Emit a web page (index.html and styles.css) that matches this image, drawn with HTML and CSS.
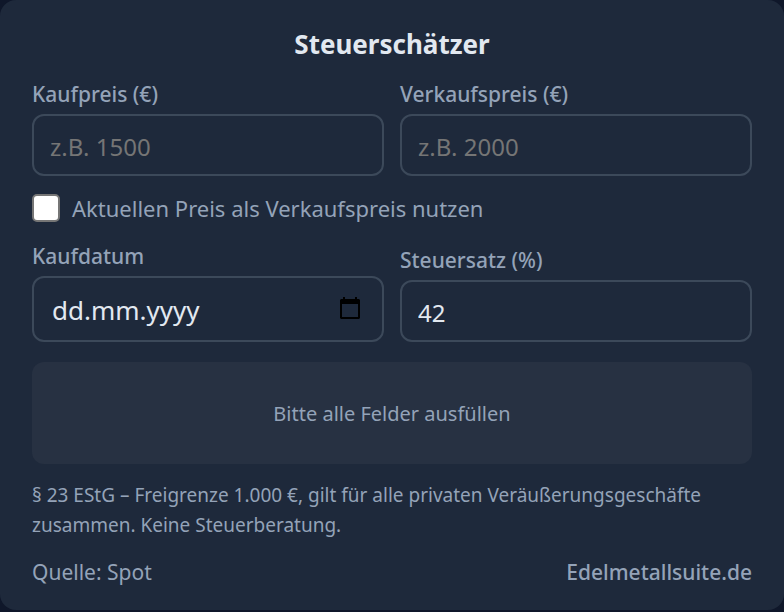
FILE: index.html
```html
<!DOCTYPE html>
<html lang="de">

<head>
    <meta charset="UTF-8">
    <meta name="viewport" content="width=device-width, initial-scale=1.0">
    <title>Steuerschätzer</title>
    <link rel="stylesheet" href="styles.css">
</head>

<body>

    <form class="widget">
        <h1 class="title">Steuerschätzer</h1>

        <div class="row">
            <div class="field">
                <label for="buy-price">Kaufpreis (€)</label>
                <input class="input" type="text" inputmode="decimal" id="buy-price" placeholder="z.B. 1500">
            </div>
            <div class="field">
                <label for="sell-price">Verkaufspreis (€)</label>
                <input class="input" type="text" inputmode="decimal" id="sell-price" placeholder="z.B. 2000">
            </div>
        </div>

        <div class="check">
            <input type="checkbox" id="use-spot">
            <label for="use-spot">Aktuellen Preis als Verkaufspreis nutzen</label>
        </div>

        <div class="row">
            <div class="field">
                <label for="buy-date">Kaufdatum</label>
                <div class="date-box">
                    <input class="date-input" type="text" id="buy-date" placeholder="dd.mm.yyyy">
                    <button class="date-button" type="button" aria-label="Kalender öffnen">
                        <svg width="20" height="22" viewBox="0 0 20 22">
                            <path fill-rule="evenodd" d="M3 0h2v2h10V0h2v2h2l1 1v18l-1 1H1l-1-1V3l1-1h2zM2 7v13h16V7z" />
                        </svg>
                    </button>
                </div>
            </div>
            <div class="field">
                <label for="tax-rate">Steuersatz (%)</label>
                <input class="input" type="text" inputmode="numeric" id="tax-rate" value="42">
            </div>
        </div>

        <div class="result">Bitte alle Felder ausfüllen</div>

        <p class="note">§ 23 EStG – Freigrenze 1.000 €, gilt für alle privaten Veräußerungsgeschäfte zusammen. Keine Steuerberatung.</p>

        <footer class="footer">
            <span>Quelle: Spot</span>
            <a href="#">Edelmetallsuite.de</a>
        </footer>
    </form>

</body>

</html>
```

FILE: styles.css
```css
* {
    box-sizing: border-box;
}

body {
    margin: 0;
    background-color: #0f172a;
    color: #e2e8f0;
    font-family: "Segoe UI", "Noto Sans", sans-serif;
}

.widget {
    padding: 26px 32px 22px;
    background-color: #1e293b;
    border-radius: 16px;
}

.title {
    margin: 0 0 16px;
    font-size: 26px;
    line-height: 36px;
    font-weight: 700;
    text-align: center;
}

.row {
    display: grid;
    grid-template-columns: repeat(2, minmax(0, 1fr));
    gap: 16px;
    align-items: end;
}

.field label {
    display: block;
    margin-bottom: 4px;
    font-size: 21px;
    line-height: 32px;
    font-weight: 500;
    color: #94a3b8;
}

.input,
.date-box {
    width: 100%;
    border: 2px solid #3c495a;
    border-radius: 12px;
    background-color: transparent;
}

.input,
.date-input {
    color: #e2e8f0;
    font-family: inherit;
    font-size: 24px;
}

.input {
    display: block;
    height: 62px;
    padding: 2px 16px 0;
}

.input::placeholder {
    color: #757575;
}

.date-box {
    display: flex;
    align-items: center;
    height: 66px;
    padding: 0 22px 0 18px;
}

.date-input {
    flex: 1;
    min-width: 0;
    padding: 2px 0 0;
    border: none;
    background: none;
    font-size: 26px;
}

.date-input::placeholder {
    color: #e2e8f0;
}

.date-button {
    padding: 0 0 2px;
    border: none;
    background: none;
    cursor: pointer;
}

.date-button svg {
    display: block;
}

.check {
    display: flex;
    align-items: center;
    gap: 12px;
    margin: 16px 0;
    font-size: 22px;
    line-height: 32px;
    color: #94a3b8;
}

.check input {
    appearance: none;
    width: 28px;
    height: 28px;
    margin: 0;
    border: 2px solid #767676;
    border-radius: 5px;
    background-color: #fff;
}

.check input:checked {
    background-color: #3b82f6;
}

.result {
    margin-top: 20px;
    padding: 36px 24px 34px;
    border-radius: 12px;
    background-color: #273142;
    color: #94a3b8;
    font-size: 20px;
    line-height: 32px;
    text-align: center;
}

.note {
    margin: 16px 0;
    color: #94a3b8;
    font-size: 19px;
    line-height: 30px;
}

.footer {
    display: flex;
    justify-content: space-between;
    color: #94a3b8;
    font-size: 21px;
    line-height: 32px;
}

.footer a {
    color: inherit;
    font-weight: 500;
    text-decoration: none;
}
```
